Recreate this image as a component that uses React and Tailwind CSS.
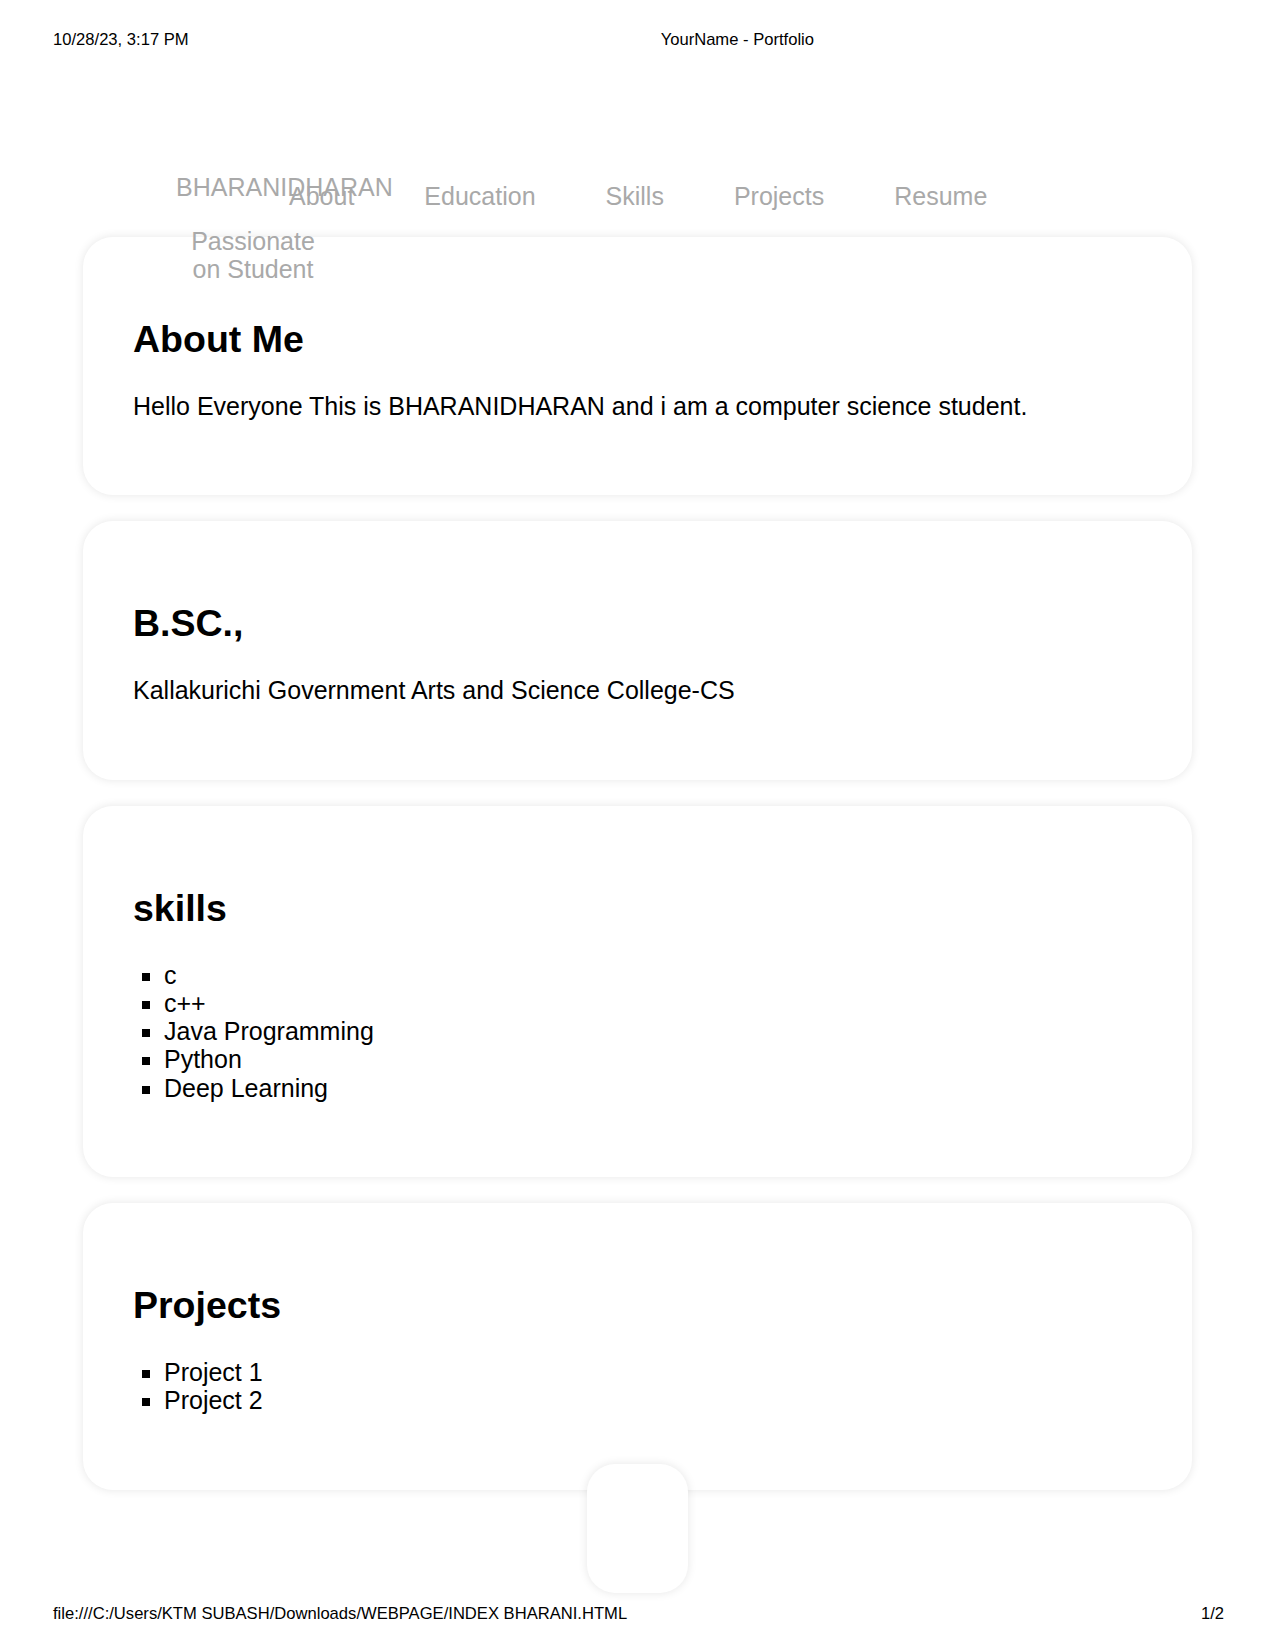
const navLinks = ['About', 'Education', 'Skills', 'Projects', 'Resume']
const skills = ['c', 'c++', 'Java Programming', 'Python', 'Deep Learning']
const projects = ['Project 1', 'Project 2']

function Card({ title, children }) {
  return (
    <section className="rounded-[30px] bg-white px-[50px] pt-[50px] pb-[50px] shadow-[0_0_10px_rgba(0,0,0,0.1)]">
      <h2 className="mt-[31px] mb-[31px] text-[37.5px] font-bold leading-[43px]">{title}</h2>
      {children}
    </section>
  )
}

export default function App() {
  return (
    <div
      className="flex h-[1650px] w-[1275px] flex-col overflow-hidden bg-white text-black"
      style={{ fontFamily: '"Liberation Sans", Arial, sans-serif' }}
    >
      {/* print header */}
      <div className="flex h-[78px] items-center pl-[53px] text-[16.6px] leading-[19px]">
        <span>10/28/23, 3:17 PM</span>
        <span className="ml-[472px]">YourName - Portfolio</span>
      </div>

      {/* site header, its tagline spills over the first card */}
      <header className="z-10 flex h-[133px] items-start pl-[176px] pt-[95px] text-[25px] leading-[28.5px] text-[#a9a9a9]">
        <div className="w-[154px] shrink-0">
          <h1 className="whitespace-nowrap">BHARANIDHARAN</h1>
          <p className="mt-[25px] text-center">Passionate on Student</p>
        </div>
        <nav className="ml-[-41px] mt-[9px]">
          <ul className="flex gap-[70px]">
            {navLinks.map((link) => (
              <li key={link}>{link}</li>
            ))}
          </ul>
        </nav>
      </header>

      <main className="mx-[83px] mt-[26px] flex flex-col gap-[26px] text-[25px] leading-[28.3px]">
        <Card title="About Me">
          <p className="mb-[25px]">Hello Everyone This is BHARANIDHARAN and i am a computer science student.</p>
        </Card>
        <Card title="B.SC.,">
          <p className="mb-[25px]">Kallakurichi Government Arts and Science College-CS</p>
        </Card>
        <Card title="skills">
          <ul className="mb-[25px] list-[square] pl-[31px]">
            {skills.map((s) => (
              <li key={s}>{s}</li>
            ))}
          </ul>
        </Card>
        <Card title="Projects">
          <ul className="mb-[25px] list-[square] pl-[31px]">
            {projects.map((p) => (
              <li key={p}>{p}</li>
            ))}
          </ul>
        </Card>
      </main>

      <footer className="mx-auto -mt-[26px] h-[129px] w-[101px] shrink-0 rounded-[28px] bg-white shadow-[0_0_10px_rgba(0,0,0,0.1)]" />

      {/* print footer */}
      <div className="flex justify-between pl-[53px] pr-[51px] pt-[11px] text-[16.6px] leading-[19px]">
        <span>file:///C:/Users/KTM SUBASH/Downloads/WEBPAGE/INDEX BHARANI.HTML</span>
        <span>1/2</span>
      </div>
    </div>
  )
}
